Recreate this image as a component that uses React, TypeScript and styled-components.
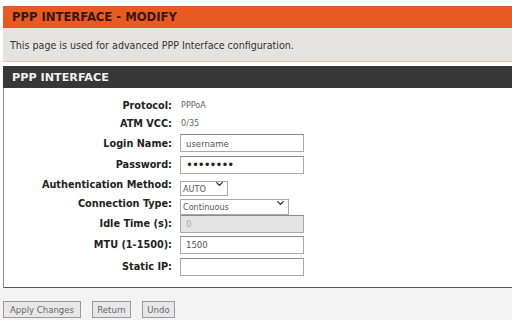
import React, { FC } from 'react'
import styled, { createGlobalStyle } from 'styled-components'
import { ChevronDown } from 'lucide-react'

const GlobalStyle = createGlobalStyle`
    html, body {
        margin: 0;
        padding: 0;
        background: #ffffff;
    }
    body {
        width: 512px;
        height: 320px;
        overflow: hidden;
        font-family: "DejaVu Sans Condensed", "DejaVu Sans", sans-serif;
    }
`

const StyledPage = styled.div`
    padding: 6px 0 0 3px;
    display: flex;
    flex-direction: column;
`
const StyledTitleBar = styled.div`
    height: 22px;
    background: #e95a20;
    color: #3c1706;
    font-family: "DejaVu Sans", sans-serif;
    font-weight: bold;
    font-size: 11.6px;
    display: flex;
    align-items: center;
    padding-left: 9px;
`
const StyledDescription = styled.div`
    height: 33px;
    background: #e4e3e1;
    border-bottom: 1px solid #f0c4ab;
    color: #333;
    font-size: 10.6px;
    display: flex;
    align-items: center;
    padding-left: 7px;
`
const StyledSectionBar = styled.div`
    margin-top: 4px;
    height: 22px;
    background: #373737;
    color: #f1f1f1;
    font-family: "DejaVu Sans", sans-serif;
    font-weight: bold;
    font-size: 11.2px;
    display: flex;
    align-items: center;
    padding-left: 9px;
`
const StyledForm = styled.div`
    background: #fff;
    border-left: 1px solid #8a8a8a;
    border-bottom: 1px solid #555;
    padding: 8px 0 9px 0;
    display: flex;
    flex-direction: column;
`
const StyledRow = styled.div<{ h: number }>`
    height: ${p => p.h}px;
    display: grid;
    grid-template-columns: 168px 1fr;
    column-gap: 8px;
    align-items: center;
`
const StyledLabel = styled.div`
    text-align: right;
    font-weight: bold;
    font-size: 10.8px;
    color: #222;
`
const StyledValue = styled.div`
    font-size: 9px;
    color: #666;
    padding-left: 1px;
`
const StyledInput = styled.input<{ disabledLook?: boolean }>`
    box-sizing: border-box;
    width: 124px;
    height: 18px;
    border: 1px solid #a9a9a9;
    border-top-color: #8c8c8c;
    background: ${p => (p.disabledLook ? '#e3e3e3' : '#fff')};
    color: ${p => (p.disabledLook ? '#aaa' : '#555')};
    font-family: "DejaVu Sans Condensed", "DejaVu Sans", sans-serif;
    font-size: 9.5px;
    padding: 0 0 0 5px;
    outline: none;
    &[type='password'] {
        font-size: 13px;
        color: #222;
        letter-spacing: -1px;
    }
`
const StyledSelectWrap = styled.div<{ w: number; h: number }>`
    position: relative;
    width: ${p => p.w}px;
    height: ${p => p.h}px;
`
const StyledSelect = styled.select`
    appearance: none;
    box-sizing: border-box;
    width: 100%;
    height: 100%;
    border: 1px solid #a9a9a9;
    background: #fff;
    color: #555;
    font-family: "DejaVu Sans Condensed", "DejaVu Sans", sans-serif;
    font-size: 9px;
    padding: 0 0 0 2px;
    outline: none;
`
const StyledChevron = styled.span`
    position: absolute;
    right: 3px;
    top: 50%;
    transform: translateY(-50%);
    display: flex;
    color: #333;
    pointer-events: none;
`
const StyledFooter = styled.div`
    box-sizing: border-box;
    background: #f3f3f3;
    height: 32px;
    padding-top: 13px;
    display: flex;
    align-items: flex-start;
    gap: 11px;
    margin-left: -3px;
`
const StyledButton = styled.button<{ w: number }>`
    box-sizing: border-box;
    width: ${p => p.w}px;
    height: 17px;
    background: #e7e7e7;
    border: 1px solid #9a9a9a;
    color: #666;
    font-family: "DejaVu Sans Condensed", "DejaVu Sans", sans-serif;
    font-size: 9.5px;
    padding: 0;
    &:first-child {
        margin-left: 3px;
    }
`

const Select: FC<{ w: number; h: number; value: string; options: string[] }> = ({ w, h, value, options }) => (
    <StyledSelectWrap w={w} h={h}>
        <StyledSelect defaultValue={value}>
            {options.map(o => <option key={o}>{o}</option>)}
        </StyledSelect>
        <StyledChevron><ChevronDown size={11} strokeWidth={3} /></StyledChevron>
    </StyledSelectWrap>
)

const App: FC = () => {
    return (
        <>
            <GlobalStyle />
            <StyledPage>
                <StyledTitleBar>PPP INTERFACE - MODIFY</StyledTitleBar>
                <StyledDescription>This page is used for advanced PPP Interface configuration.</StyledDescription>
                <StyledSectionBar>PPP INTERFACE</StyledSectionBar>
                <StyledForm>
                    <StyledRow h={18}>
                        <StyledLabel>Protocol:</StyledLabel>
                        <StyledValue>PPPoA</StyledValue>
                    </StyledRow>
                    <StyledRow h={18}>
                        <StyledLabel>ATM VCC:</StyledLabel>
                        <StyledValue>0/35</StyledValue>
                    </StyledRow>
                    <StyledRow h={22}>
                        <StyledLabel>Login Name:</StyledLabel>
                        <StyledInput defaultValue="username" />
                    </StyledRow>
                    <StyledRow h={21}>
                        <StyledLabel>Password:</StyledLabel>
                        <StyledInput type="password" defaultValue="password" />
                    </StyledRow>
                    <StyledRow h={18}>
                        <StyledLabel>Authentication Method:</StyledLabel>
                        <Select w={48} h={15} value="AUTO" options={['AUTO', 'PAP', 'CHAP']} />
                    </StyledRow>
                    <StyledRow h={20}>
                        <StyledLabel>Connection Type:</StyledLabel>
                        <Select w={109} h={16} value="Continuous" options={['Continuous', 'Connect on Demand', 'Manual']} />
                    </StyledRow>
                    <StyledRow h={21}>
                        <StyledLabel>Idle Time (s):</StyledLabel>
                        <StyledInput disabledLook defaultValue="0" readOnly />
                    </StyledRow>
                    <StyledRow h={21}>
                        <StyledLabel>MTU (1-1500):</StyledLabel>
                        <StyledInput defaultValue="1500" />
                    </StyledRow>
                    <StyledRow h={23}>
                        <StyledLabel>Static IP:</StyledLabel>
                        <StyledInput defaultValue="" />
                    </StyledRow>
                </StyledForm>
                <StyledFooter>
                    <StyledButton w={78}>Apply Changes</StyledButton>
                    <StyledButton w={39}>Return</StyledButton>
                    <StyledButton w={33}>Undo</StyledButton>
                </StyledFooter>
            </StyledPage>
        </>
    )
}

export default App
